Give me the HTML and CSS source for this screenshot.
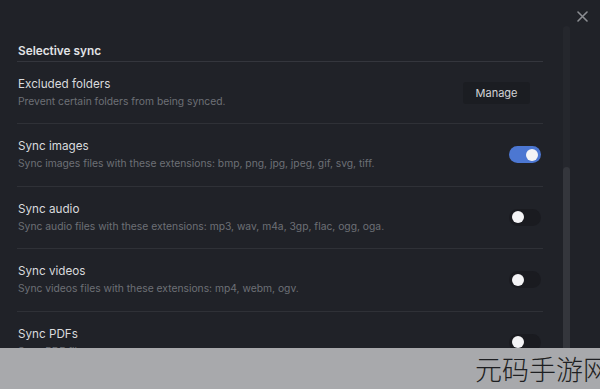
FILE: index.html
```html
<!DOCTYPE html>
<html lang="en">
<head>
<meta charset="utf-8">
<title>Selective sync</title>
<link rel="stylesheet" href="styles.css">
</head>
<body>
<div class="modal">
  <button class="close" aria-label="Close">
    <svg width="11" height="11" viewBox="0 0 11 11"><path d="M1 1L10 10M10 1L1 10" stroke="#8b8d92" stroke-width="1.6" stroke-linecap="round"/></svg>
  </button>
  <div class="scrollbar"><div class="thumb"></div></div>
  <div class="content">
    <h3 class="heading">Selective sync</h3>
    <div class="setting">
      <div class="info">
        <div class="name">Excluded folders</div>
        <div class="desc">Prevent certain folders from being synced.</div>
      </div>
      <button class="btn">Manage</button>
    </div>
    <div class="setting">
      <div class="info">
        <div class="name">Sync images</div>
        <div class="desc">Sync images files with these extensions: bmp, png, jpg, jpeg, gif, svg, tiff.</div>
      </div>
      <div class="toggle on"><span class="knob"></span></div>
    </div>
    <div class="setting">
      <div class="info">
        <div class="name">Sync audio</div>
        <div class="desc">Sync audio files with these extensions: mp3, wav, m4a, 3gp, flac, ogg, oga.</div>
      </div>
      <div class="toggle"><span class="knob"></span></div>
    </div>
    <div class="setting">
      <div class="info">
        <div class="name">Sync videos</div>
        <div class="desc">Sync videos files with these extensions: mp4, webm, ogv.</div>
      </div>
      <div class="toggle"><span class="knob"></span></div>
    </div>
    <div class="setting">
      <div class="info">
        <div class="name">Sync PDFs</div>
        <div class="desc">Sync PDF files.</div>
      </div>
      <div class="toggle"><span class="knob"></span></div>
    </div>
  </div>
  <div class="watermark"><span class="wm-text">元码手游网</span></div>
</div>
</body>
</html>
```

FILE: styles.css
```css
html, body {
  margin: 0;
  padding: 0;
}
body {
  background: #202228;
  font-family: Inter, "Noto Sans", sans-serif;
  color: #dcdde0;
  width: 600px;
  height: 389px;
  overflow: hidden;
}
.modal {
  position: relative;
  width: 600px;
  height: 389px;
  overflow: hidden;
}
.close {
  position: absolute;
  left: 576px;
  top: 10px;
  width: 13px;
  height: 13px;
  padding: 1px;
  border: 0;
  background: transparent;
  display: flex;
  align-items: center;
  justify-content: center;
}
.scrollbar {
  position: absolute;
  left: 563px;
  top: 26px;
  width: 7px;
  height: 332px;
  background: #25272d;
  border-radius: 4px 4px 0 0;
}
.thumb {
  margin-top: 141px;
  height: 191px;
  background: #34363c;
  border-radius: 4px 4px 0 0;
}
.content {
  width: 526px;
  margin-left: 17px;
  display: flex;
  flex-direction: column;
}
.heading {
  margin: 43px 0 0;
  padding: 0 0 1px 1px;
  font-size: 11.8px;
  line-height: 17px;
  font-weight: 600;
  color: #e2e3e6;
  border-bottom: 1px solid #34363d;
}
.setting {
  display: flex;
  align-items: center;
  padding: 14px 0 14.4px 1px;
  border-bottom: 1px solid #2f3137;
}
.info {
  flex: 1;
  display: flex;
  flex-direction: column;
}
.name {
  font-size: 11.7px;
  line-height: 17px;
  color: #d9dadd;
}
.desc {
  font-size: 10.3px;
  line-height: 16px;
  color: #6d7076;
}
.btn {
  margin-right: 13px;
  width: 67px;
  height: 22px;
  border: 0;
  border-radius: 3px;
  background: #1b1d22;
  color: #d3d4d7;
  font-family: Inter, "Noto Sans", sans-serif;
  font-size: 11px;
  padding: 0;
}
.toggle {
  margin-right: 2px;
  width: 32px;
  height: 17px;
  border-radius: 9px;
  background: #1a1b20;
  display: flex;
  align-items: center;
  padding: 0 3px;
  box-sizing: border-box;
}
.toggle .knob {
  width: 12px;
  height: 12px;
  border-radius: 50%;
  background: #f4f4f6;
}
.toggle.on {
  background: #4c77d2;
  justify-content: flex-end;
}
.watermark {
  position: absolute;
  left: 0;
  top: 348px;
  width: 600px;
  height: 41px;
  background: #a8a9ac;
}
.wm-text {
  position: absolute;
  left: 475px;
  top: 4px;
  font-family: "Noto Sans CJK SC", sans-serif;
  font-weight: 300;
  font-size: 27px;
  line-height: 34px;
  color: #1e1f22;
  white-space: nowrap;
}
```
